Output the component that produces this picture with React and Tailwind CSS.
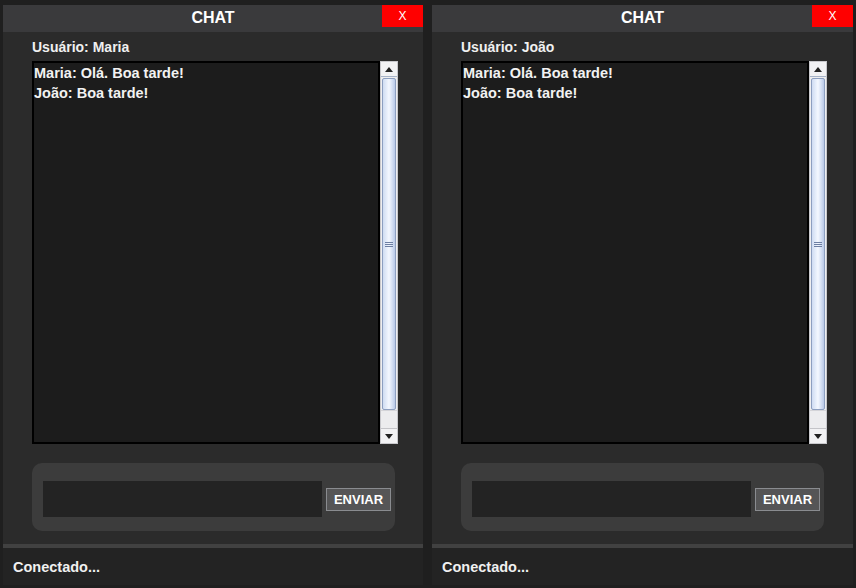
import React from "react";

const font = { fontFamily: '"Liberation Sans", Arial, sans-serif' };

const ScrollBar = () => (
  <div className="w-[18px] h-full flex flex-col bg-[#eeeef0] border border-[#c8c8cc]">
    <div className="h-[15px] flex items-center justify-center bg-[#f2f2f4] border-b border-[#a8b4c8]">
      <svg width="8" height="5" viewBox="0 0 8 5">
        <polygon points="0,5 8,5 4,0" fill="#222" />
      </svg>
    </div>
    <div className="flex-1 mx-[1px] mt-[1px] flex items-center justify-center rounded-[2px] border border-[#8d9fc0] bg-gradient-to-r from-[#cfdcf2] via-[#f4f8ff] to-[#b9c9e8]">
      <div className="flex flex-col gap-[1px]">
        <div className="w-[8px] h-[1px] bg-[#6d7fa3]" />
        <div className="w-[8px] h-[1px] bg-[#6d7fa3]" />
        <div className="w-[8px] h-[1px] bg-[#6d7fa3]" />
      </div>
    </div>
    <div className="h-[18px] bg-[#ececee] border-t border-[#d4d4d8]" />
    <div className="h-[15px] flex items-center justify-center bg-[#f2f2f4] border-t border-[#c4c4c8]">
      <svg width="8" height="5" viewBox="0 0 8 5">
        <polygon points="0,0 8,0 4,5" fill="#222" />
      </svg>
    </div>
  </div>
);

const ChatWindow = ({ width, user, messages }) => (
  <div className={`${width} h-[580px] flex flex-col`} style={font}>
    <div className="relative h-[27px] bg-[#3a3a3c] flex items-center justify-center">
      <span className="text-white font-bold text-[16px] leading-none -mt-[1px]">CHAT</span>
      <button className="absolute top-0 right-0 w-[41px] h-[22px] bg-[#ff0000] text-white text-[12px] flex items-center justify-center">
        X
      </button>
    </div>
    <div className="flex-1 bg-[#2b2b2b] pl-[29px] pt-[7px] flex flex-col">
      <div className="text-[#f0f0f0] font-bold text-[14px] leading-[16px] h-[22px]">
        Usuário: {user}
      </div>
      <div className="flex w-[366px] h-[383px]">
        <div className="flex-1 bg-[#1c1c1c] border-2 border-black pl-[0px] pt-[0px]">
          {messages.map((m, i) => (
            <div key={i} className="text-[#f2f2f2] font-bold text-[14.5px] leading-[20px]">
              {m}
            </div>
          ))}
        </div>
        <ScrollBar />
      </div>
      <div className="mt-[19px] w-[363px] h-[68px] rounded-[10px] bg-[#3c3c3c] pl-[11px] pt-[18px] flex items-start">
        <div className="w-[279px] h-[36px] bg-[#232323]" />
        <button className="ml-[4px] mt-[7px] w-[65px] h-[23px] bg-[#555556] border border-[#8a8c90] text-white font-bold text-[13px] flex items-center justify-center">
          ENVIAR
        </button>
      </div>
    </div>
    <div className="h-[4px] bg-[#414141]" />
    <div className="h-[37px] bg-[#232323] pl-[10px] pt-[3px] flex items-center">
      <span className="text-[#f0f0f0] font-bold text-[14.5px]">Conectado...</span>
    </div>
  </div>
);

export default function App() {
  return (
    <div className="w-[856px] h-[588px] bg-[#1f1f1f] pl-[3px] pt-[5px] flex gap-[9px] overflow-hidden">
      <ChatWindow
        width="w-[420px]"
        user="Maria"
        messages={["Maria: Olá. Boa tarde!", "João: Boa tarde!"]}
      />
      <ChatWindow
        width="w-[421px]"
        user="João"
        messages={["Maria: Olá. Boa tarde!", "João: Boa tarde!"]}
      />
    </div>
  );
}
